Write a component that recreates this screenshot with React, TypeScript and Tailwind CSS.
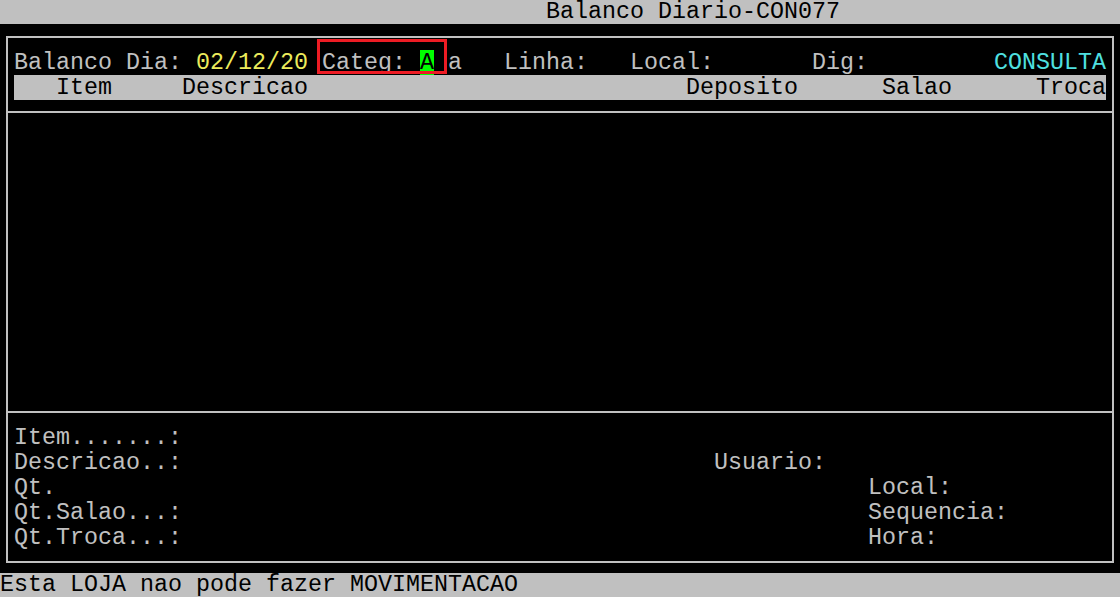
const mono = "font-['Liberation_Mono','Courier_New',monospace] text-[23.33px] leading-[26px] whitespace-pre";

export default function App() {
    return (
        <div className={`relative w-[1120px] h-[597px] bg-black overflow-hidden ${mono}`}>
            {/* title bar */}
            <div className="h-[24px] leading-[25px] bg-[#c0c0c0] text-black">
                {"                                       Balanco Diario-CON077"}
            </div>

            {/* terminal body */}
            <div className="h-[549px] pt-[12px] px-[6px]">
                <div className="border-2 border-[#c0c0c0] text-[#c0c0c0]">
                    <div className="pt-[12px] px-[6px]">
                        <div className="h-[25px]">
                            {"Balanco Dia: "}
                            <span className="text-[#ecec5c]">02/12/20</span>
                            {" Categ: "}
                            <span className="inline-block h-[25px] bg-[#00ff00] text-black">A</span>
                            {" a   Linha:   Local:       Dig:         "}
                            <span className="text-[#4fe0e0]">CONSULTA</span>
                        </div>
                        <div className="h-[25px] bg-[#c0c0c0] text-black">
                            {"   Item     Descricao                           Deposito      Salao      Troca"}
                        </div>
                    </div>
                    <div className="mt-[11px] border-t-2 border-[#c0c0c0] h-[300px]" />
                    <div className="border-t-2 border-[#c0c0c0] pt-[12px] pb-[11px] px-[6px]">
                        <div className="h-[25px]">{"Item.......:"}</div>
                        <div className="h-[25px]">{"Descricao..:                                      Usuario:"}</div>
                        <div className="h-[25px]">{"Qt.                                                          Local:"}</div>
                        <div className="h-[25px]">{"Qt.Salao...:                                                 Sequencia:"}</div>
                        <div className="h-[25px]">{"Qt.Troca...:                                                 Hora:"}</div>
                    </div>
                </div>
            </div>

            {/* status line */}
            <div className="h-[24px] leading-[25px] bg-[#c0c0c0] text-black">
                {"Esta LOJA nao pode fazer MOVIMENTACAO"}
            </div>

            {/* red highlight annotation */}
            <div className="absolute left-[317px] top-[39px] w-[130px] h-[35px] border-[3px] border-[#ed1c24]" />
        </div>
    )
}
